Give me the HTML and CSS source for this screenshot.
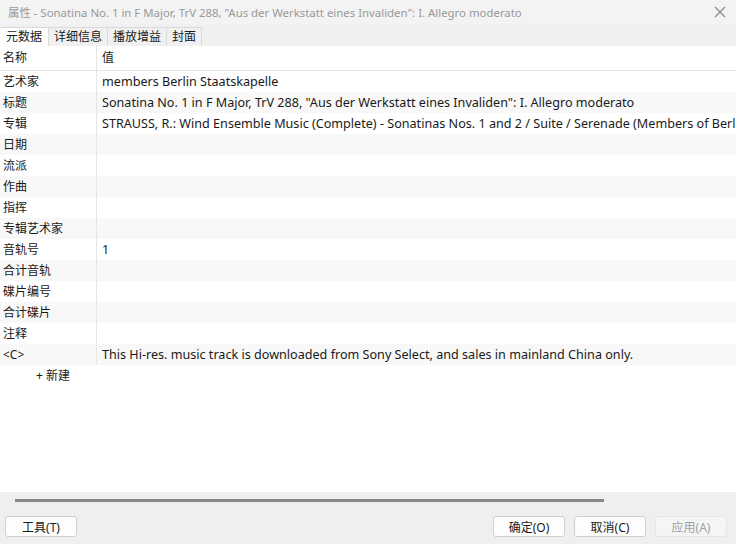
FILE: index.html
```html
<!DOCTYPE html>
<html>
<head>
  <title>属性</title>
  <link rel="stylesheet" href="styles.css">
</head>
<body>
  <div class="window">
    <!-- Title bar -->
    <div class="titlebar">
      <span class="title">属性 - Sonatina No. 1 in F Major, TrV 288, "Aus der Werkstatt eines Invaliden": I. Allegro moderato</span>
      <svg class="close" width="12" height="12" viewBox="0 0 12 12">
        <path d="M1 1 L11 11 M11 1 L1 11" stroke="#888" stroke-width="1.1" fill="none"/>
      </svg>
    </div>

    <!-- Tabs -->
    <div class="tabs">
      <div class="tab active">元数据</div>
      <div class="tab">详细信息</div>
      <div class="tab">播放增益</div>
      <div class="tab">封面</div>
    </div>

    <!-- Metadata table -->
    <div class="panel">
      <div class="row head">
        <div class="name">名称</div>
        <div class="value">值</div>
      </div>
      <div class="row"><div class="name">艺术家</div><div class="value">members Berlin Staatskapelle</div></div>
      <div class="row"><div class="name">标题</div><div class="value">Sonatina No. 1 in F Major, TrV 288, "Aus der Werkstatt eines Invaliden": I. Allegro moderato</div></div>
      <div class="row"><div class="name">专辑</div><div class="value">STRAUSS, R.: Wind Ensemble Music (Complete) - Sonatinas Nos. 1 and 2 / Suite / Serenade (Members of Berlin Staatskapelle)</div></div>
      <div class="row"><div class="name">日期</div><div class="value"></div></div>
      <div class="row"><div class="name">流派</div><div class="value"></div></div>
      <div class="row"><div class="name">作曲</div><div class="value"></div></div>
      <div class="row"><div class="name">指挥</div><div class="value"></div></div>
      <div class="row"><div class="name">专辑艺术家</div><div class="value"></div></div>
      <div class="row"><div class="name">音轨号</div><div class="value">1</div></div>
      <div class="row"><div class="name">合计音轨</div><div class="value"></div></div>
      <div class="row"><div class="name">碟片编号</div><div class="value"></div></div>
      <div class="row"><div class="name">合计碟片</div><div class="value"></div></div>
      <div class="row"><div class="name">注释</div><div class="value"></div></div>
      <div class="row"><div class="name">&lt;C&gt;</div><div class="value">This Hi-res. music track is downloaded from Sony Select, and sales in mainland China only.</div></div>
      <div class="add">+ 新建</div>
    </div>

    <!-- Footer -->
    <div class="footer">
      <div class="scrollbar"><div class="thumb"></div></div>
      <div class="buttons">
        <button class="btn">工具(T)</button>
        <div class="spacer"></div>
        <button class="btn">确定(O)</button>
        <button class="btn">取消(C)</button>
        <button class="btn disabled">应用(A)</button>
      </div>
    </div>
  </div>
</body>
</html>
```

FILE: styles.css
```css
body {
  margin: 0;
  font-family: "Noto Sans", "Noto Sans CJK SC", sans-serif;
  font-size: 12px;
  color: #1a1a1a;
}
.window {
  width: 736px;
  height: 544px;
  display: flex;
  flex-direction: column;
  background: #efefef;
  overflow: hidden;
}
/* Title bar */
.titlebar {
  height: 24px;
  display: flex;
  align-items: center;
  padding: 0 8px;
  background: #f3f3f3;
}
.title {
  flex: 1;
  color: #999;
  font-size: 11.4px;
  white-space: nowrap;
}
.close {
  margin-right: 2px;
}
/* Tabs */
.tabs {
  height: 22px;
  display: flex;
  align-items: flex-end;
  background: #f0f0f0;
}
.tab {
  height: 18px;
  line-height: 18px;
  padding: 0 5px;
  border: 1px solid #d9d9d9;
  border-bottom: none;
  margin-left: -1px;
  background: #f0f0f0;
}
.tab.active {
  margin-left: 0;
  padding: 0 6px;
  background: #fff;
  border-left: none;
}
/* Table */
.panel {
  flex: 1;
  background: #fff;
}
.row {
  display: flex;
  height: 21px;
  line-height: 21px;
  overflow: hidden;
}
.row:nth-child(odd) {
  background: #f8f8f8;
}
.row.head {
  height: 24px;
  line-height: 24px;
  background: #fff;
  border-bottom: 1px solid #e5e5e5;
}
.name {
  width: 93px;
  padding-left: 3px;
  border-right: 1px solid #e5e5e5;
  flex-shrink: 0;
}
.value {
  padding-left: 5px;
  font-size: 12.6px;
  white-space: nowrap;
}
.head .value {
  font-size: 12px;
}
.add {
  padding-left: 36px;
  line-height: 22px;
}
/* Footer */
.footer {
  height: 52px;
  background: #efefef;
}
.scrollbar {
  padding: 7px 0 0 15px;
  height: 3px;
}
.thumb {
  width: 589px;
  height: 3px;
  background: #888;
}
.buttons {
  display: flex;
  gap: 9px;
  padding: 14px 9px 0 5px;
}
.spacer {
  flex: 1;
}
.btn {
  width: 72px;
  height: 21px;
  font: inherit;
  color: #1a1a1a;
  background: #fdfdfd;
  border: 1px solid #d0d0d0;
  border-radius: 3px;
  padding: 0;
}
.btn.disabled {
  color: #a0a0a0;
  background: #f5f5f5;
  border-color: #e5e5e5;
}
```
